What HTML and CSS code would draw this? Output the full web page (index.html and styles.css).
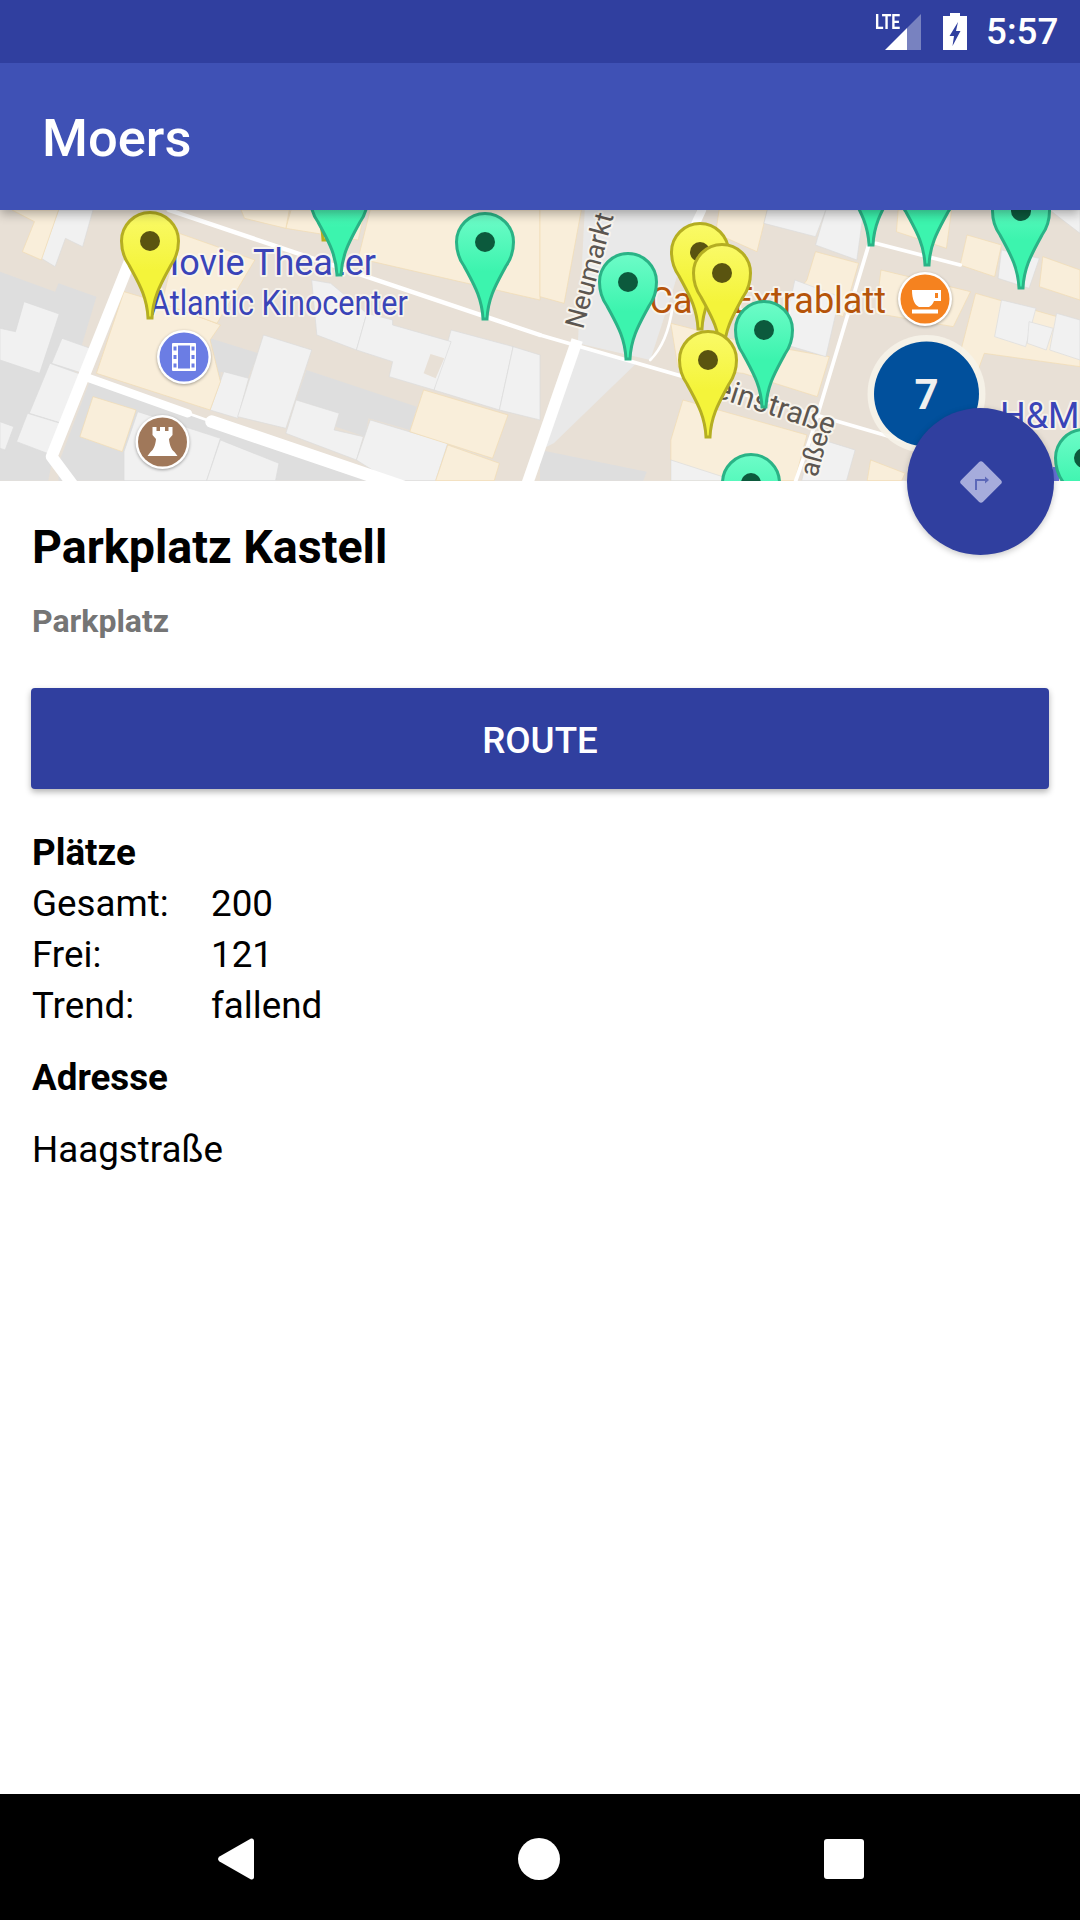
FILE: index.html
```html
<!DOCTYPE html>
<html lang="de">
<head>
<meta charset="utf-8">
<title>Moers</title>
<link rel="stylesheet" href="styles.css">
</head>
<body>
<div class="screen">
  <div class="status">
    <div class="signal">
      <span class="lte">LTE</span>
      <svg class="signal-icon" width="36" height="36" viewBox="0 0 36 36"><path class="sig-dim" d="M36 0V36H22V14Z"/><path class="sig-on" d="M22 14V36H0Z"/></svg>
    </div>
    <svg class="battery" width="24" height="37" viewBox="0 0 24 37"><path class="sig-on" fill-rule="evenodd" d="M7 0H17V3H24V37H0V3H7ZM15 9L6.500 23H11L9.500 33L17.500 18H13Z"/></svg>
    <span class="time">5:57</span>
  </div>
  <header class="toolbar"><h1 class="app-title">Moers</h1></header>
  <div class="map">
    <svg class="map-svg" width="1080" height="271" viewBox="0 210 1080 271">
      <defs>
        <linearGradient id="gy" x1="0" y1="0" x2="0" y2="1"><stop offset="0" stop-color="#fafa68"/><stop offset=".55" stop-color="#f4f43a"/><stop offset="1" stop-color="#f4f43a"/></linearGradient>
        <linearGradient id="gg" x1="0" y1="0" x2="0" y2="1"><stop offset="0" stop-color="#6efcc8"/><stop offset=".55" stop-color="#3cf4ae"/><stop offset="1" stop-color="#3cf4ae"/></linearGradient>
        <g id="pin-y"><path class="pin-y" d="M-2 0C-3 -22 -12 -36 -21 -53C-26 -60 -28.500 -68 -28.500 -77A28.500 28.500 0 1 1 28.500 -77C28.500 -68 26 -60 21 -53C12 -36 3 -22 2 0Z"/><circle class="dot-y" cy="-77" r="10"/></g>
        <g id="pin-g"><path class="pin-g" d="M-2 0C-3 -22 -12 -36 -21 -53C-26 -60 -28.500 -68 -28.500 -77A28.500 28.500 0 1 1 28.500 -77C28.500 -68 26 -60 21 -53C12 -36 3 -22 2 0Z"/><circle class="dot-g" cy="-77" r="10"/></g>
      </defs>
      <rect class="m-bg" x="0" y="210" width="1080" height="271"/>
      <!-- left half, traced in crop coordinates -->
      <g transform="translate(0 200) scale(.3444 .3333)">
        <path class="m-gray" d="M0 215L160 275L170 250L280 290L210 530L150 790L140 842H0Z"/>
        <path class="m-gray" d="M260 545L1150 842H170V790Z"/>
        <path class="m-gray" d="M890 510L1210 620L1190 690L1070 655L1060 710L975 680L985 640L860 600Z"/>
        <path class="m-gray" d="M610 415L750 460L720 535L640 515V545L590 530Z"/>
        <path class="m-light" d="M170 30H270L240 140L190 115L160 200L120 175Z"/>
        <path class="m-light" d="M0 385L45 395L70 305L172 342L115 520L0 480Z"/>
        <path class="m-light" d="M145 490L240 525L180 670L85 640Z"/>
        <path class="m-light" d="M180 415L262 445L240 520L150 490Z"/>
        <path class="m-light" d="M80 640L175 670L150 765L48 725Z"/>
        <path class="m-light" d="M0 665L40 680L15 750L0 745Z"/>
        <path class="m-light" d="M650 515L722 535L690 655L610 630Z"/>
        <path class="m-light" d="M765 405L905 450L830 685L690 650Z"/>
        <path class="m-light" d="M860 600L985 640L970 690L1055 710L1035 780L830 700Z"/>
        <path class="m-light" d="M1075 660L1300 730L1265 842H1130L1035 780Z"/>
        <path class="m-light" d="M905 240L960 250L1065 340L1035 450L920 405Z"/>
        <path class="m-light" d="M1310 390L1490 440L1450 630L1260 570Z"/>
        <path class="m-light" d="M1490 440L1568 465V660L1450 630Z"/>
        <path class="m-light" d="M1065 340L1140 360V375L1310 425L1260 570L1130 530L1140 485L1035 450Z"/>
        <path class="m-bgp" d="M1250 462L1290 475L1265 535L1230 520Z"/>
        <path class="m-light" d="M400 635L640 715L600 842H360V755Z"/>
        <path class="m-light" d="M640 720L810 790L800 842H600Z"/>
        <path class="m-tan" d="M35 30L100 65L65 155L120 180L170 30Z"/>
        <path class="m-tan" d="M360 275L475 310L640 375L610 420L640 545L610 630L280 520Z"/>
        <path class="m-tan" d="M270 590L395 630L355 755L232 710Z"/>
        <path class="m-tan" d="M1230 570L1475 645L1430 775L1190 695Z"/>
        <path class="m-tan" d="M1300 735L1450 790L1435 842H1265Z"/>
        <path class="m-tan" d="M520 100L740 180L630 370L470 310Z"/>
        <path class="m-tan" d="M845 30H1060L1040 120L830 85Z"/>
        <path class="m-tan" d="M700 30H840L830 85L710 55Z"/>
        <path class="m-tan" d="M1075 30H1568V300L1040 175Z"/>
        <path class="m-road w35" d="M378 180L150 770L215 860"/>
        <path class="m-road w25" d="M260 535L545 640"/>
        <path class="m-road w8" d="M545 640L615 665"/>
        <path class="m-road w40" d="M615 665L1170 860"/>
        <path class="m-road w12" d="M490 30L1568 405"/>
      </g>
      <!-- right half, traced in crop coordinates -->
      <g transform="translate(540 200) scale(.3444 .3333)">
        <path class="m-tan" d="M0 30H120L70 310L0 290Z"/>
        <path class="m-pale" d="M130 30H455L380 290L320 480L110 430Z"/>
        <path class="m-pale" d="M120 440L280 490L40 730L0 750V690Z"/>
        <path class="m-gray" d="M0 750L310 815L300 842H0Z"/>
        <path class="m-tan" d="M520 30H660L630 155L510 100Z"/>
        <path class="m-tan" d="M380 370L570 420L840 470L805 590L590 520L400 500Z"/>
        <path class="m-tan" d="M415 600L775 705L740 842H380V720Z"/>
        <path class="m-light" d="M660 30H830L800 110L650 70Z"/>
        <path class="m-light" d="M830 30H940L920 180L800 135Z"/>
        <path class="m-tan" d="M800 155L925 190L880 350L730 300L775 240Z"/>
        <path class="m-light" d="M740 240L870 290L830 470L700 430Z"/>
        <path class="m-tan" d="M1040 30H1195L1180 145L1035 95Z"/>
        <path class="m-tan" d="M990 210L1250 275L1200 380L975 340Z"/>
        <path class="m-tan" d="M1265 280L1568 370V500L1290 460L1240 600L1195 560Z"/>
        <path class="m-light" d="M1340 300L1440 325L1410 440L1320 410Z"/>
        <path class="m-light" d="M1420 365L1490 385L1470 450L1415 430Z"/>
        <path class="m-light" d="M1500 340L1568 360V480L1480 450Z"/>
        <path class="m-tan" d="M1240 105L1340 135L1320 230L1220 195Z"/>
        <path class="m-light" d="M1340 150L1450 175L1420 265L1330 235Z"/>
        <path class="m-tan" d="M1460 170L1568 210V300L1450 260Z"/>
        <path class="m-light" d="M1480 30H1568V100Z"/>
        <path class="m-light" d="M380 780L530 830V842H380Z"/>
        <path class="m-light" d="M790 710L915 750L890 842H760Z"/>
        <path class="m-tan" d="M960 780L1060 820L1050 842H950Z"/>
        <path class="m-road w10" d="M0 405L1050 720"/>
        <path class="m-road w32 butt" d="M108 420L-45 875"/>
        <path class="m-road w10" d="M985 30L790 700L740 850"/>
        <path class="m-road w10" d="M975 130L1220 195"/>
        <path class="m-road w25" d="M470 30L450 75"/>
        <path class="m-road w8" d="M385 320Q370 430 320 480"/>
      </g>
      <text class="lbl lbl-blue" x="376" y="275" text-anchor="end">Movie Theater</text>
      <text class="lbl lbl-blue lbl-sm" transform="translate(150 315) scale(.885 1)">Atlantic Kinocenter</text>
      <text class="lbl lbl-orange" x="886" y="313" text-anchor="end">Café Extrablatt</text>
      <text class="lbl lbl-street" transform="translate(583 330) rotate(-75)">Neumarkt</text>
      <text class="lbl lbl-street lbl-wide" text-anchor="end" transform="translate(832 435) rotate(18)">Steinstraße</text>
      <text class="lbl lbl-street" transform="translate(817 478) rotate(-75)">aße</text>
      <text class="lbl lbl-blue" x="1000" y="428">H&amp;M</text>
      <rect class="m-blue" x="1053" y="467" width="6" height="14"/>

      <g class="poi" transform="translate(184 357)">
        <circle class="poi-ring" r="27"/><circle class="poi-film" r="24.500"/>
        <rect class="poi-white" x="-12" y="-14" width="24" height="28" rx="1"/>
        <rect class="poi-film" x="-6" y="-11.500" width="12" height="23"/>
        <path class="poi-film" d="M-10.500 -10.500h3v4h-3zM-10.500 -2h3v4h-3zM-10.500 6.500h3v4h-3zM7.500 -10.500h3v4h-3zM7.500 -2h3v4h-3zM7.500 6.500h3v4h-3z"/>
      </g>
      <g class="poi" transform="translate(162.500 442)">
        <circle class="poi-ring" r="27"/><circle class="poi-rook" r="24.500"/>
        <path class="poi-white" d="M-10 -15H-6V-11H-2.500V-15H2.500V-11H6V-15H10V-7L6.500 -3C7 3 9 8 12 10L15 14H-15L-12 10C-9 8 -7 3 -6.500 -3L-10 -7Z"/>
      </g>
      <g class="poi" transform="translate(925 299)">
        <circle class="poi-ring" r="27"/><circle class="poi-cup" r="24.500"/>
        <path class="poi-white" fill-rule="evenodd" d="M-13 -9H16V2H9C8 5 6 7 4 8H-6C-10 6 -13 1 -13 -9ZM10 -6V-1H13V-6Z"/>
        <rect class="poi-white" x="-13" y="10.500" width="26" height="4"/>
      </g>

      <circle class="cl-halo" cx="926.500" cy="394" r="59"/>
      <circle class="cl-core" cx="926.500" cy="394" r="52.500"/>
      <text class="cl-num" x="926.500" y="409" text-anchor="middle">7</text>

      <use href="#pin-y" x="325" y="240"/>
      <use href="#pin-g" x="339" y="275"/>
      <use href="#pin-y" x="150" y="318"/>
      <use href="#pin-g" x="485" y="319"/>
      <use href="#pin-g" x="871" y="245"/>
      <use href="#pin-g" x="927" y="265"/>
      <use href="#pin-g" x="1021" y="288"/>
      <use href="#pin-g" x="628" y="359"/>
      <use href="#pin-y" x="700" y="329"/>
      <use href="#pin-y" x="722" y="350"/>
      <use href="#pin-g" x="764" y="407"/>
      <use href="#pin-y" x="708" y="437"/>
      <use href="#pin-g" x="1084" y="535"/>
      <use href="#pin-g" x="751" y="560"/>
    </svg>
  </div>
  <main class="details">
    <h2 class="place">Parkplatz Kastell</h2>
    <p class="kind">Parkplatz</p>
    <button class="route" type="button">ROUTE</button>
    <h3 class="sect">Plätze</h3>
    <dl class="facts">
      <dt>Gesamt:</dt><dd>200</dd>
      <dt>Frei:</dt><dd>121</dd>
      <dt>Trend:</dt><dd>fallend</dd>
    </dl>
    <h3 class="sect sect-addr">Adresse</h3>
    <p class="addr">Haagstraße</p>
  </main>
  <nav class="navbar">
    <svg width="36" height="42" viewBox="0 0 36 42"><path class="nav-i" d="M33 0.500C35 0 36 1.500 36 3V39C36 40.500 35 42 33 41.500L1.500 23.500C-0.500 22 -0.500 20 1.500 18.500Z"/></svg>
    <svg width="42" height="42" viewBox="0 0 42 42"><circle class="nav-i" cx="21" cy="21" r="21"/></svg>
    <svg width="40" height="40" viewBox="0 0 40 40"><rect class="nav-i" width="40" height="40" rx="3"/></svg>
  </nav>
  <button class="fab" type="button" aria-label="Route">
    <svg width="46" height="46" viewBox="0 0 46 46"><rect class="fab-d" x="7.500" y="7.500" width="31" height="31" rx="3" transform="rotate(45 23 23)"/><path class="fab-a" d="M18 31V21H28"/><path class="fab-h" d="M27 17.500L31 21L27 24.500Z"/></svg>
  </button>
</div>
</body>
</html>
```
FILE: styles.css
```css
* { box-sizing: border-box; }
html, body { margin: 0; padding: 0; background: #fff; }
body { font-family: Roboto, "Liberation Sans", sans-serif; color: #000; }
.screen { position: relative; width: 1080px; height: 1920px; display: flex; flex-direction: column; overflow: hidden; }

.status { height: 63px; background: #303f9f; display: flex; align-items: center; justify-content: flex-end; padding-right: 24px; color: #fff; flex: none; position: relative; z-index: 3; }
.signal { position: relative; width: 36px; height: 36px; margin-right: 22px; }
.signal-icon { display: block; }
.sig-on { fill: #fff; }
.sig-dim { fill: #fff; fill-opacity: .35; }
.lte { position: absolute; left: -10px; top: -1px; font-size: 20px; line-height: 18px; font-weight: 700; transform: scaleX(.78); transform-origin: left top; }
.battery { margin-right: 19px; }
.time { font-size: 36.75px; font-weight: 500; line-height: 40px; width: 70px; white-space: nowrap; }

.toolbar { height: 147px; flex: none; background: #3f51b5; display: flex; align-items: center; padding: 2px 0 0 42px; box-shadow: 0 4px 10px rgba(0,0,0,.3); position: relative; z-index: 2; }
.app-title { margin: 0; font-size: 52.5px; line-height: 60px; font-weight: 500; color: #fff; }

.map { height: 271px; flex: none; overflow: hidden; position: relative; }
.map-svg { display: block; }
.m-bg, .m-bgp { fill: #e8e0d6; }
.m-gray { fill: #dedede; }
.m-light { fill: #f1f1f1; stroke: #dcdcdc; stroke-width: 2; }
.m-pale { fill: #e9e9e9; }
.m-tan { fill: #f9eeda; stroke: #f1dcb2; stroke-width: 2; }
.m-road { fill: none; stroke: #fff; stroke-linecap: round; stroke-linejoin: round; }
.butt { stroke-linecap: butt; }
.w8 { stroke-width: 8; } .w10 { stroke-width: 11; } .w12 { stroke-width: 13; } .w25 { stroke-width: 25; } .w32 { stroke-width: 34; } .w35 { stroke-width: 34; } .w40 { stroke-width: 38; }
.m-blue { fill: #6672d6; }
.lbl { font-family: Roboto, sans-serif; font-size: 36px; paint-order: stroke; stroke: rgba(250,247,240,.85); stroke-width: 4px; stroke-linejoin: round; }
.lbl-sm { font-size: 34.5px; }
.lbl-blue { fill: #3a44b8; }
.lbl-orange { fill: #b5540a; }
.lbl-street { fill: #5c5650; font-size: 27px; }
.lbl-wide { font-size: 30px; }
.poi-ring { fill: #fff; filter: drop-shadow(0 1px 1.5px rgba(0,0,0,.35)); }
.poi-white { fill: #fff; }
.poi-film { fill: #6b7de4; }
.poi-rook { fill: #a0785a; }
.poi-cup { fill: #f5821f; }
.cl-halo { fill: #f7f3ea; fill-opacity: .85; }
.cl-core { fill: #01509c; }
.cl-num { font-family: Roboto, sans-serif; font-size: 42px; font-weight: 700; fill: #efefef; }
.pin-y { fill: url(#gy); stroke: #b5ae22; stroke-width: 3; }
.pin-g { fill: url(#gg); stroke: #2ab386; stroke-width: 3; }
.dot-y { fill: #5a5410; }
.dot-g { fill: #0c5a3d; }

.details { flex: 1; padding: 0 31px; display: flex; flex-direction: column; background: #fff; }
.place, .kind, .sect, .facts, .addr { padding-left: 1px; }
.place { margin: 38px 0 0; font-size: 46.6px; line-height: 56px; font-weight: 700; }
.kind { margin: 28px 0 0; font-size: 32px; line-height: 37px; font-weight: 700; color: #757575; }
.route { margin: 48px 0 0; height: 101px; width: 100%; border: 0; border-radius: 4px; background: #303f9f; color: #fff; font-family: inherit; font-size: 36.75px; font-weight: 500; box-shadow: 0 3px 6px rgba(0,0,0,.3); padding: 4px 0 0; }
.sect { margin: 38px 0 0; font-size: 36.75px; line-height: 51px; font-weight: 700; }
.facts { margin: 0; display: grid; grid-template-columns: 179px 1fr; font-size: 36.75px; line-height: 51px; }
.facts dt, .facts dd { margin: 0; }
.sect-addr { margin-top: 21px; }
.addr { margin: 21px 0 0; font-size: 36.75px; line-height: 51px; }

.navbar { height: 126px; flex: none; background: #000; display: flex; align-items: center; justify-content: center; gap: 264px; padding: 4px 0 0 2px; }
.nav-i { fill: #fff; }

.fab { position: absolute; left: 907px; top: 408px; width: 147px; height: 147px; border-radius: 50%; border: 0; padding: 0; background: #303f9f; box-shadow: 0 2px 6px rgba(0,0,0,.22); display: flex; align-items: center; justify-content: center; z-index: 1; }
.fab-d { fill: #a6acdc; }
.fab-a { fill: none; stroke: #5c68b8; stroke-width: 2; }
.fab-h { fill: #5c68b8; }
```
